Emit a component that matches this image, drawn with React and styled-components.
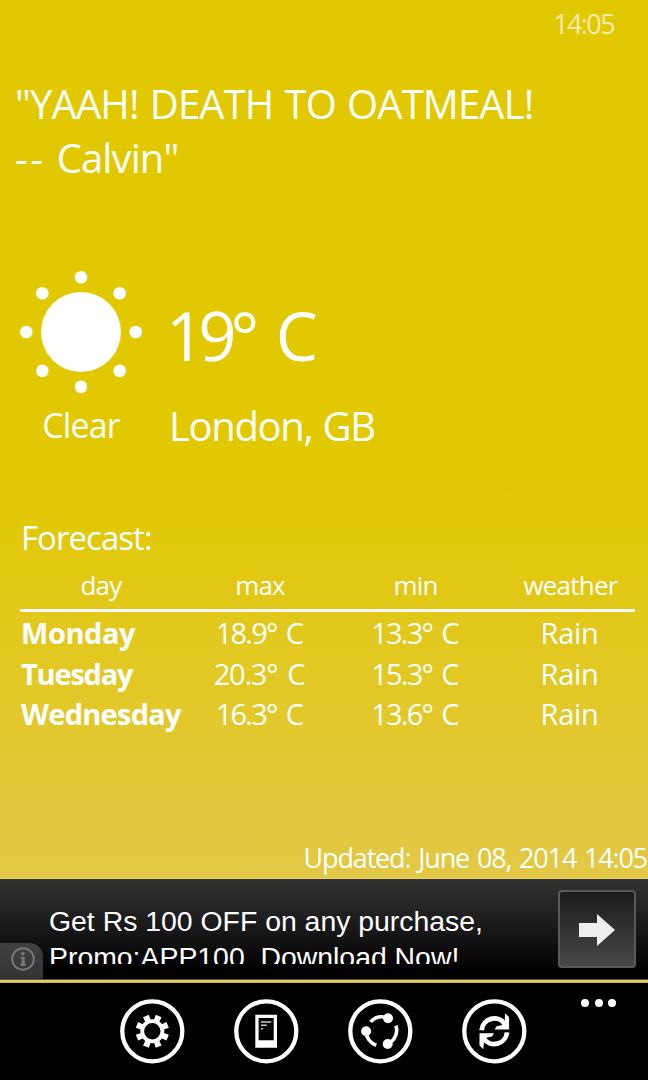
import React from 'react';
import styled, { createGlobalStyle } from 'styled-components';

const GlobalStyle = createGlobalStyle`
    body {
        margin: 0;
        background: #000;
    }
`;

const Phone = styled.div`
    display: flex;
    flex-direction: column;
    width: 648px;
    height: 1080px;
    overflow: hidden;
    color: #fff;
    font-family: "Open Sans", "Noto Sans", sans-serif;
    background: #000;
`;

const Screen = styled.main`
    display: flex;
    flex-direction: column;
    box-sizing: border-box;
    height: 879px;
    background: linear-gradient(#e2c800 465px, #e2c846 879px);
    border-bottom: 1px solid #ead467;
    white-space: nowrap;
`;

const StatusBar = styled.div`
    height: 46px;
    padding-right: 34px;
    font-size: 27px;
    line-height: 47px;
    letter-spacing: -1.6px;
    text-align: right;
    color: rgba(255, 255, 255, 0.7);
`;

const Quote = styled.div`
    margin-top: 31px;
    padding-left: 15px;
    font-size: 40px;
    line-height: 54px;
    letter-spacing: -0.88px;
    word-spacing: 1.6px;
`;

const Dashes = styled.span`
    letter-spacing: 2.4px;
`;

const Current = styled.section`
    display: grid;
    grid-template-columns: 122px auto;
    column-gap: 27px;
    margin-top: 86px;
    padding-left: 20px;
`;

const Condition = styled.div`
    display: flex;
    flex-direction: column;
    gap: 9px;
    font-size: 34px;
    line-height: 46px;
    letter-spacing: -0.9px;
    text-align: center;
`;

const Reading = styled.div`
    display: flex;
    flex-direction: column;
    gap: 17px;
    padding-top: 18px;
`;

const Temperature = styled.div`
    margin-left: -3px;
    font-size: 67px;
    line-height: 92px;
    letter-spacing: -6px;
    word-spacing: 11px;
`;

const City = styled.div`
    font-size: 40px;
    line-height: 55px;
    letter-spacing: -1.35px;
    word-spacing: 1px;
`;

const Forecast = styled.section`
    margin-top: 62px;
    padding-left: 20px;
`;

const ForecastTitle = styled.div`
    margin-left: 1px;
    font-size: 33px;
    line-height: 45px;
    letter-spacing: -0.95px;
`;

const ForecastRow = styled.div`
    display: grid;
    grid-template-columns: 162px 156px 155px 155px;
    font-size: 29px;
    line-height: 40.5px;
    text-align: center;
`;

const ForecastHead = styled(ForecastRow)`
    margin-top: 7px;
    font-size: 26px;
    line-height: 36px;
    letter-spacing: -0.8px;
`;

const Rule = styled.div`
    height: 3px;
    margin: 6px 13px 1px 0;
    background: #fff;
`;

const Day = styled.div`
    padding-left: 1px;
    font-weight: 700;
    text-align: left;
    letter-spacing: ${props => props.$spacing}px;
`;

const Cell = styled.div`
    padding-right: 2px;
    letter-spacing: ${props => props.$spacing}px;
    word-spacing: 3.5px;
`;

const Updated = styled.div`
    margin-top: auto;
    padding: 0 1px 2px 0;
    font-size: 27px;
    line-height: 37px;
    letter-spacing: -1.17px;
    word-spacing: 2px;
    text-align: right;
`;

const Ad = styled.aside`
    position: relative;
    display: flex;
    justify-content: space-between;
    box-sizing: border-box;
    height: 101px;
    padding: 11px 12px 0 49px;
    background: linear-gradient(#333, #000 95%);
    border-bottom: 1px solid #5c5644;
`;

const AdText = styled.div`
    height: 61px;
    margin-top: 13px;
    overflow: hidden;
    font-family: "Liberation Sans", Arial, sans-serif;
    font-size: 28.4px;
    line-height: 36px;
    white-space: nowrap;
`;

const AdButton = styled.button`
    display: flex;
    align-items: center;
    justify-content: center;
    box-sizing: border-box;
    width: 78px;
    height: 78px;
    padding: 1px 0 0;
    border: 2px solid #5a5a5a;
    border-radius: 4px;
    background: linear-gradient(#1b1b1b, #484848);
`;

const AdInfo = styled.div`
    position: absolute;
    left: 0;
    bottom: 0;
    width: 43px;
    height: 36px;
    border-top-right-radius: 14px;
    background: linear-gradient(#414141, #333);
`;

const GoldLine = styled.div`
    height: 3px;
    background: linear-gradient(#e4cc66 60%, #bfa53c);
`;

const AppBar = styled.nav`
    display: flex;
    height: 97px;
    padding: 15px 0 0 120px;
    box-sizing: border-box;
    background: #000;
`;

const Actions = styled.div`
    display: flex;
    gap: 48px;
`;

const More = styled.div`
    display: flex;
    gap: 5.5px;
    margin: 0.5px 0 0 53px;
`;

const Dot = styled.span`
    width: 8px;
    height: 8px;
    border-radius: 50%;
    background: #fff;
`;

const days = [
    { day: 'Monday', max: '18.9° C', min: '13.3° C', weather: 'Rain', daySpacing: -0.45, maxSpacing: -1.8 },
    { day: 'Tuesday', max: '20.3° C', min: '15.3° C', weather: 'Rain', daySpacing: -1.2, maxSpacing: -1.2 },
    { day: 'Wednesday', max: '16.3° C', min: '13.6° C', weather: 'Rain', daySpacing: -0.75, maxSpacing: -1.8 },
];

const Sun = () => (
    <svg width="122" height="122" viewBox="-61 -61 122 122" fill="#fff">
        <circle r="40" />
        {[0, 45, 90, 135, 180, 225, 270, 315].map(angle => (
            <circle key={angle} cy="-54.7" r="6.3" transform={`rotate(${angle})`} />
        ))}
    </svg>
);

const ActionIcon = ({ children }) => (
    <svg width="66" height="66" viewBox="0 0 66 66" fill="#fff">
        <circle cx="32.3" cy="33.3" r="30" fill="none" stroke="#fff" strokeWidth="4.3" />
        {children}
    </svg>
);

const Settings = () => (
    <ActionIcon>
        <g transform="translate(32.3 33.3)">
            <circle r="10.1" fill="none" stroke="#fff" strokeWidth="3.8" />
            {[0, 1, 2, 3, 4, 5, 6, 7].map(i => (
                <path key={i} d="M-2.8 -10.5L-3.1 -16.6H3.1L2.8 -10.5Z" transform={`rotate(${22.5 + i * 45})`} />
            ))}
        </g>
    </ActionIcon>
);

const LockScreen = () => (
    <ActionIcon>
        <path fillRule="evenodd" d="M21.3 16.8H43V49.7H21.3ZM24.6 20V42.2H39.7V20Z" />
        <path d="M27 24H37.2M27 27.3H32.8M27 30.7H29" fill="none" stroke="#ccc" strokeWidth="1.5" />
    </ActionIcon>
);

const Share = () => (
    <ActionIcon>
        <path
            d="M22.6 23.9A14.3 14.3 0 0 1 40 20.2M18 33.5A15 15 0 0 0 28.3 47.2M39.7 45.8A14.8 14.8 0 0 0 47.9 27.6"
            fill="none"
            stroke="#fff"
            strokeWidth="3.6"
        />
        <circle cx="40" cy="20.2" r="5" />
        <circle cx="18.1" cy="33.3" r="5" />
        <circle cx="39.7" cy="46" r="5" />
    </ActionIcon>
);

const Refresh = () => (
    <ActionIcon>
        {[0, 180].map(angle => (
            <g key={angle} transform={`rotate(${angle} 32.3 33.3)`}>
                <path d="M19.6 32.2A12.8 12.8 0 0 1 43 26.2" fill="none" stroke="#fff" strokeWidth="4.8" />
                <path d="M43.2 15.3L47.1 19.2V31.4H32.6L34.6 28.2L39.6 27.2L42.6 23.5Z" />
            </g>
        ))}
    </ActionIcon>
);

const App = () => {
    return (
        <Phone>
            <GlobalStyle />
            <Screen>
                <StatusBar>14:05</StatusBar>
                <Quote>
                    "YAAH! DEATH TO OATMEAL!<br />
                    <Dashes>--</Dashes> Calvin"
                </Quote>
                <Current>
                    <Condition>
                        <Sun />
                        <div>Clear</div>
                    </Condition>
                    <Reading>
                        <Temperature>19° C</Temperature>
                        <City>London, GB</City>
                    </Reading>
                </Current>
                <Forecast>
                    <ForecastTitle>Forecast:</ForecastTitle>
                    <ForecastHead>
                        <div>day</div>
                        <div>max</div>
                        <div>min</div>
                        <div>weather</div>
                    </ForecastHead>
                    <Rule />
                    {days.map(item => (
                        <ForecastRow key={item.day}>
                            <Day $spacing={item.daySpacing}>{item.day}</Day>
                            <Cell $spacing={item.maxSpacing}>{item.max}</Cell>
                            <Cell $spacing={-1.8}>{item.min}</Cell>
                            <Cell $spacing={-0.3}>{item.weather}</Cell>
                        </ForecastRow>
                    ))}
                </Forecast>
                <Updated>Updated: June 08, 2014 14:05</Updated>
            </Screen>
            <Ad>
                <AdText>
                    Get Rs 100 OFF on any purchase,<br />
                    Promo:APP100, Download Now!
                </AdText>
                <AdButton>
                    <svg width="36" height="32" viewBox="0 0 36 32" fill="#eee">
                        <path d="M0 9H18V0L36 16L18 32V23H0Z" />
                    </svg>
                </AdButton>
                <AdInfo>
                    <svg width="43" height="36" viewBox="0 0 43 36" fill="#777">
                        <circle cx="23" cy="16" r="10.8" fill="none" stroke="#777" strokeWidth="2" />
                        <circle cx="23" cy="10.6" r="1.8" />
                        <path d="M20.4 13.8H24.7V21H26V22.8H20.2V21H21.5V15.4H20.4Z" />
                    </svg>
                </AdInfo>
            </Ad>
            <GoldLine />
            <AppBar>
                <Actions>
                    <Settings />
                    <LockScreen />
                    <Share />
                    <Refresh />
                </Actions>
                <More>
                    <Dot />
                    <Dot />
                    <Dot />
                </More>
            </AppBar>
        </Phone>
    );
};

export default App;
